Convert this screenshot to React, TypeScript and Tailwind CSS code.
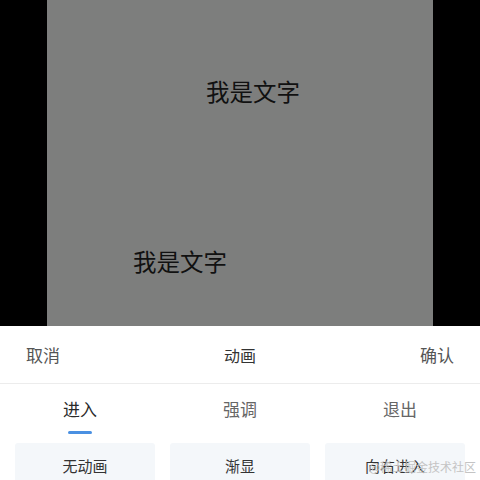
const font = { fontFamily: '"Noto Sans CJK SC", "Noto Sans", sans-serif' };

function Tab({ label, active }: { label: string; active?: boolean }) {
  return (
    <div className="flex flex-col items-center">
      <div
        className={`text-[17px] leading-6 ${active ? "text-[#2a2a2a]" : "text-[#666666]"}`}
      >
        {label}
      </div>
      <div
        className={`mt-[10px] h-[3px] w-6 rounded-full ${active ? "bg-[#4a90e2]" : "bg-transparent"}`}
      />
    </div>
  );
}

export default function App() {
  const effects = ["无动画", "渐显", "向右进入"];
  return (
    <div className="relative h-[480px] w-[480px] overflow-hidden bg-white" style={font}>
      {/* preview canvas */}
      <div className="flex h-[326px] justify-center bg-black">
        <div className="relative h-full w-[386px] bg-[#7d7e7d]">
          <span className="absolute left-[159px] top-[75px] text-[23.5px] leading-8 text-[#111111]">
            我是文字
          </span>
          <span className="absolute left-[86px] top-[245px] text-[23.5px] leading-8 text-[#111111]">
            我是文字
          </span>
        </div>
      </div>

      {/* bottom sheet */}
      <div className="flex h-[58px] items-center justify-between border-b border-[#ececec] px-[26px]">
        <span className="text-[17px] text-[#555555]">取消</span>
        <span className="text-[16px] text-[#333333]">动画</span>
        <span className="text-[17px] text-[#555555]">确认</span>
      </div>

      <div className="grid grid-cols-3 pt-[13px]">
        <Tab label="进入" active />
        <Tab label="强调" />
        <Tab label="退出" />
      </div>

      <div className="mt-[9px] grid grid-cols-3 gap-[15px] px-[15px]">
        {effects.map((e) => (
          <div
            key={e}
            className="flex h-[46px] items-center justify-center rounded-[3px] bg-[#f4f7fa] text-[15px] text-[#333333]"
          >
            {e}
          </div>
        ))}
      </div>

      <span className="absolute bottom-[4px] right-[4px] text-[12px] text-[#c4c4c4]">
        @稀土掘金技术社区
      </span>
    </div>
  );
}
